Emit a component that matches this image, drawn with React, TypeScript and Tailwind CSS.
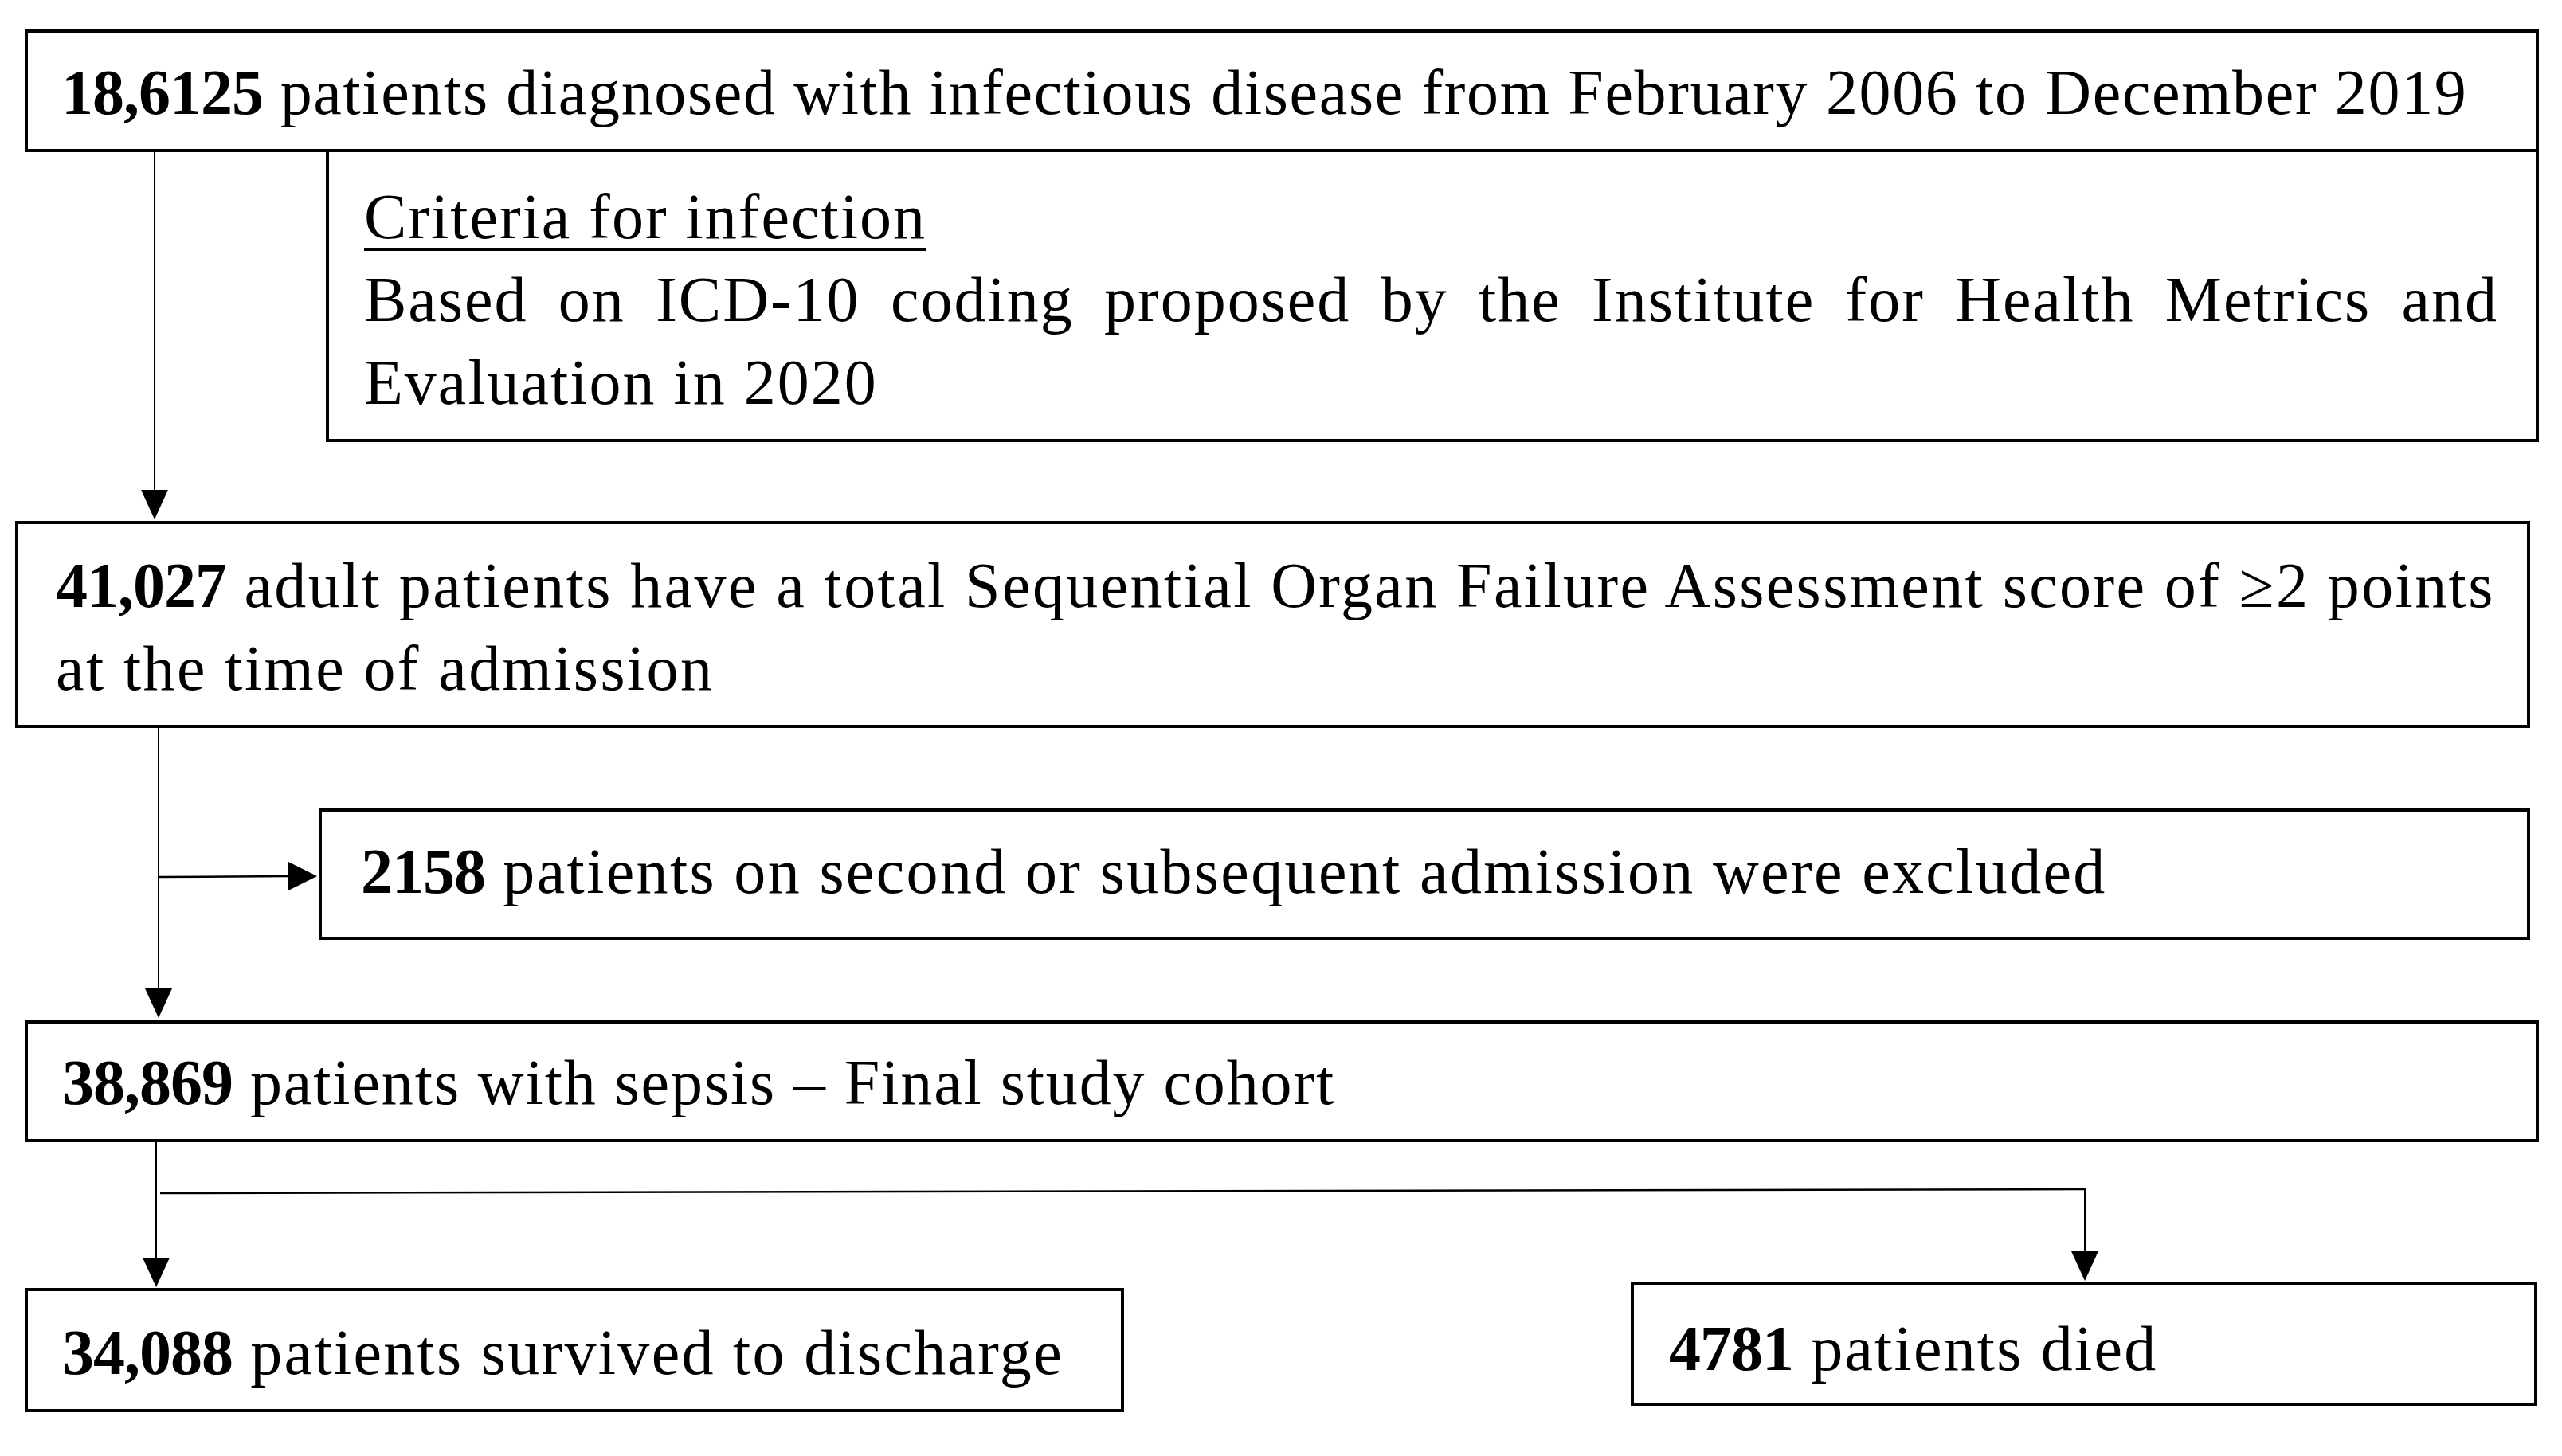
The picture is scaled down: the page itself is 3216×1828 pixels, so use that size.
import * as React from 'react';

const serif = "font-['Liberation_Serif','Times_New_Roman',serif]";

function Box({ className, children }: { className: string; children: React.ReactNode }) {
  return (
    <div
      className={`box-border border-[4px] border-black bg-white text-[80px] leading-[104px] whitespace-nowrap text-black ${className}`}
    >
      {children}
    </div>
  );
}

function Num({ children }: { children: React.ReactNode }) {
  return <b className="tracking-[-1px]">{children}</b>;
}

function Arrowhead({ x, y, dir = 'down' }: { x: number; y: number; dir?: 'down' | 'right' }) {
  // x,y = tip of the arrow
  const pts =
    dir === 'down'
      ? `${x - 17},${y - 37} ${x + 17},${y - 37} ${x},${y}`
      : `${x - 36},${y - 18} ${x - 36},${y + 18} ${x},${y}`;
  return <polygon points={pts} fill="black" />;
}

export default function App() {
  return (
    <div className={`h-[1828px] w-[3216px] overflow-hidden bg-white pt-[37px] ${serif}`}>
      {/* total infections */}
      <Box className="ml-[31px] h-[154px] w-[3156px] pl-[42px] pt-[23px] tracking-[1.65px]">
        <Num>18,6125</Num> patients diagnosed with infectious disease from February 2006 to December 2019
      </Box>

      {/* criteria + first arrow */}
      <div className="ml-[31px] flex h-[463px] items-start">
        <svg width="378" height="463" className="shrink-0 overflow-visible">
          <line x1="163" y1="0" x2="163" y2="430" stroke="black" strokeWidth="2" />
          <Arrowhead x={163} y={461} />
        </svg>
        <div className="box-border h-[364px] w-[2778px] border-[4px] border-t-0 border-black pl-[44px] pr-[47px] pt-[29px] text-[80px] leading-[104px] tracking-[2px] text-black">
          <div className="underline decoration-[4px] underline-offset-[12px]">Criteria for infection</div>
          <div className="text-justify [text-align-last:justify]">
            Based on ICD-10 coding proposed by the Institute for Health Metrics and
          </div>
          <div>Evaluation in 2020</div>
        </div>
      </div>

      {/* SOFA */}
      <Box className="ml-[19px] h-[260px] w-[3157px] pl-[47px] pt-[25px] tracking-[2.4px]">
        <Num>41,027</Num> adult patients have a total Sequential Organ Failure Assessment score of ≥2 points
        <br />
        at the time of admission
      </Box>

      {/* exclusion branch */}
      <div className="flex h-[367px] items-start">
        <svg width="400" height="367" className="shrink-0 overflow-visible">
          <line x1="199" y1="0" x2="199" y2="330" stroke="black" strokeWidth="2" />
          <Arrowhead x={199} y={364} />
          <line x1="199" y1="187" x2="366" y2="186" stroke="black" strokeWidth="2.5" />
          <Arrowhead x={398} y={186} dir="right" />
        </svg>
        <Box className="mt-[101px] h-[165px] w-[2776px] pl-[49px] pt-[23px] tracking-[2.35px]">
          <Num>2158</Num> patients on second or subsequent admission were excluded
        </Box>
      </div>

      {/* final cohort */}
      <Box className="ml-[31px] h-[153px] w-[3156px] pl-[43px] pt-[22px] tracking-[1.9px]">
        <Num>38,869</Num> patients with sepsis – Final study cohort
      </Box>

      {/* outcome split */}
      <svg width="3216" height="175" className="block overflow-visible">
        <line x1="196" y1="0" x2="196" y2="150" stroke="black" strokeWidth="2" />
        <Arrowhead x={196} y={182} />
        <line x1="201" y1="64" x2="2618" y2="59" stroke="black" strokeWidth="2.5" />
        <line x1="2617" y1="59" x2="2617" y2="140" stroke="black" strokeWidth="2" />
        <Arrowhead x={2617} y={174} />
      </svg>

      <div className="flex items-start">
        <Box className="ml-[31px] mt-[8px] h-[156px] w-[1380px] pl-[43px] pt-[25px] tracking-[2.3px]">
          <Num>34,088</Num> patients survived to discharge
        </Box>
        <Box className="ml-[636px] h-[156px] w-[1138px] pl-[44px] pt-[28px] tracking-[2.2px]">
          <Num>4781</Num> patients died
        </Box>
      </div>
    </div>
  );
}
